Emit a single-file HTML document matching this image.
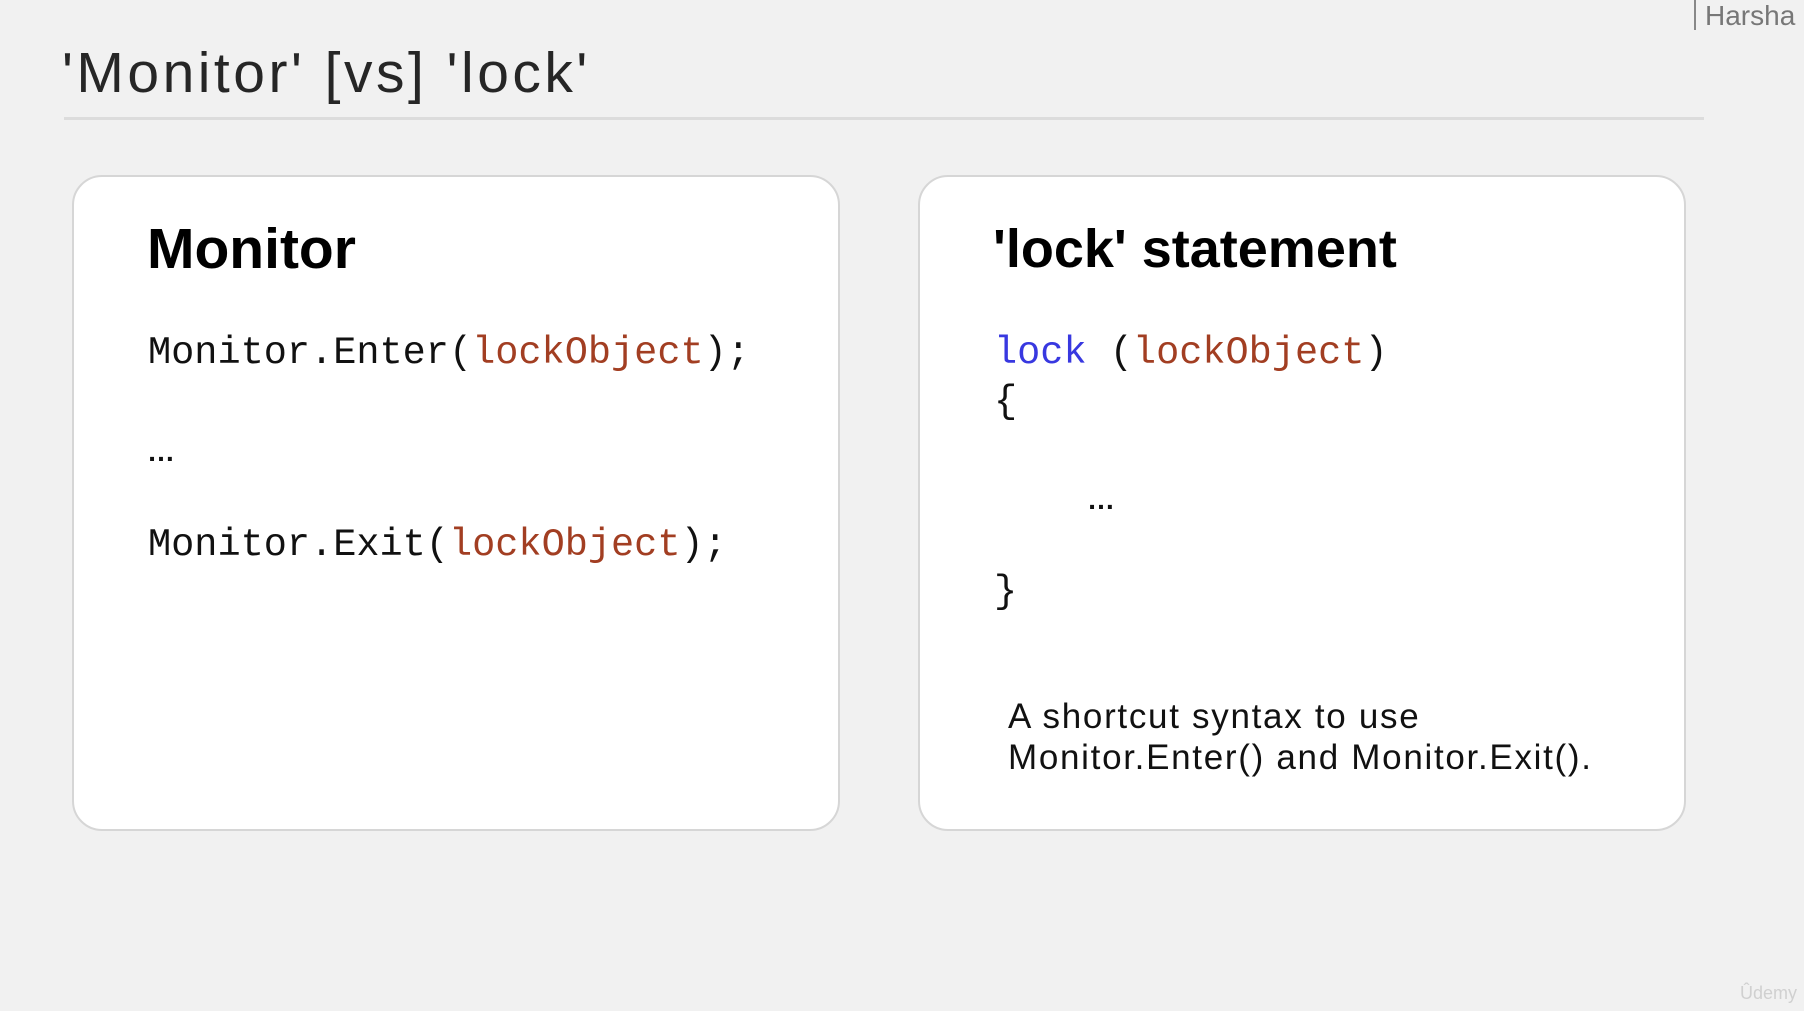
<!DOCTYPE html>
<html><head><meta charset="utf-8"><style>
html,body{margin:0;padding:0}
body{width:1804px;height:1011px;background:#f1f1f1;position:relative;overflow:hidden;font-family:"Liberation Sans",sans-serif}
.a{position:absolute;white-space:pre}
.card{position:absolute;top:175px;height:656px;background:#fff;border:2px solid #d6d6d6;border-radius:30px;box-sizing:border-box}
.code{font-family:"Liberation Mono","DejaVu Sans Mono",monospace;font-size:38.6px;color:#111}
.r{color:#a23e22}.b{color:#3838e0}
.dots{font-family:"Liberation Sans",sans-serif;font-weight:bold;font-size:28px;color:#111}
</style></head><body>
<div class="a" style="left:1694px;top:0;width:2px;height:30px;background:#888"></div>
<div class="a" style="left:1705px;top:0px;font-size:28px;color:#777">Harsha</div>
<div class="a" style="left:62px;top:40px;font-size:57px;color:#262626;letter-spacing:3.5px">'Monitor' [vs] 'lock'</div>
<div class="a" style="left:64px;top:117px;width:1640px;height:3px;background:#dcdcdc"></div>
<div class="card" style="left:72px;width:768px"></div>
<div class="card" style="left:918px;width:768px"></div>
<div class="a" style="left:147px;top:216px;font-size:57px;font-weight:bold;color:#000">Monitor</div>
<div class="a code" style="left:148px;top:331px">Monitor.Enter(<span class="r">lockObject</span>);</div>
<div class="a dots" style="left:147px;top:436px">…</div>
<div class="a code" style="left:148px;top:523px">Monitor.Exit(<span class="r">lockObject</span>);</div>
<div class="a" style="left:993px;top:218px;font-size:54px;font-weight:bold;color:#000">'lock' statement</div>
<div class="a code" style="left:994px;top:331px"><span class="b">lock</span> (<span class="r">lockObject</span>)</div>
<div class="a code" style="left:994px;top:380px">{</div>
<div class="a dots" style="left:1087px;top:484px">…</div>
<div class="a code" style="left:994px;top:570px">}</div>
<div class="a" style="left:1008px;top:696px;font-size:35px;color:#111;line-height:41px;letter-spacing:1.7px">A shortcut syntax to use
Monitor.Enter() and Monitor.Exit().</div>
<div class="a" style="left:1740px;top:983px;font-size:18px;color:#d0d0d0">Ûdemy</div>
</body></html>
